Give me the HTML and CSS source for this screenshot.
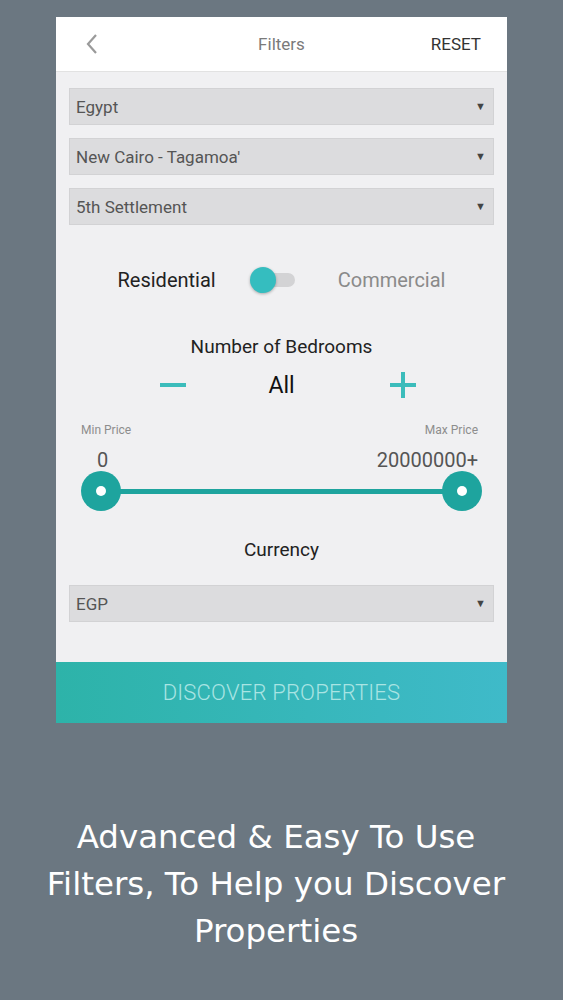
FILE: index.html
```html
<!DOCTYPE html>
<html>
<head>
<meta charset="utf-8">
<link rel="stylesheet" href="styles.css">
</head>
<body>
<div class="card">
  <div class="header">
    <svg class="back" width="14" height="22" viewBox="0 0 14 22"><path d="M11 2 L3 11 L11 20" fill="none" stroke="#9a9a9a" stroke-width="2.2"/></svg>
    <span class="title">Filters</span>
    <span class="reset">RESET</span>
  </div>
  <div class="body">
    <div class="select"><span>Egypt</span><span class="arrow">▼</span></div>
    <div class="select"><span>New Cairo - Tagamoa'</span><span class="arrow">▼</span></div>
    <div class="select"><span>5th Settlement</span><span class="arrow">▼</span></div>

    <div class="type-row">
      <span class="res">Residential</span>
      <span class="toggle"><span class="track"></span><span class="knob"></span></span>
      <span class="com">Commercial</span>
    </div>

    <div class="label bedrooms">Number of Bedrooms</div>
    <div class="counter">
      <span class="minus"></span>
      <span class="all">All</span>
      <span class="plus"></span>
    </div>

    <div class="price-labels"><span>Min Price</span><span>Max Price</span></div>
    <div class="price-values"><span class="minv">0</span><span>20000000+</span></div>
    <div class="slider">
      <span class="thumb"></span>
      <span class="line"></span>
      <span class="thumb"></span>
    </div>

    <div class="label currency">Currency</div>
    <div class="select"><span>EGP</span><span class="arrow">▼</span></div>
  </div>
  <div class="discover">DISCOVER PROPERTIES</div>
</div>
<div class="caption">Advanced &amp; Easy To Use<br>Filters, To Help you Discover<br>Properties</div>
</body>
</html>
```
FILE: styles.css
```css
html, body { margin: 0; padding: 0; }
body {
  background: #6b7781;
  width: 563px;
  height: 1000px;
  font-family: Roboto, "Noto Sans", sans-serif;
  overflow: hidden;
}
.card {
  margin: 17px 0 0 56px;
  width: 451px;
  background: #f0f0f2;
}
.header {
  height: 55px;
  background: #fff;
  border-bottom: 1px solid #e2e2e2;
  display: flex;
  align-items: center;
  position: relative;
  padding: 0 26px 0 29px;
  box-sizing: border-box;
  justify-content: space-between;
}
.title {
  position: absolute;
  left: 0; right: 0;
  text-align: center;
  color: #7a7a7a;
  font-size: 17px;
  pointer-events: none;
}
.reset { color: #333; font-size: 17px; }
.body { padding: 16px 13px 40px; }
.select {
  height: 37px;
  box-sizing: border-box;
  background: #dcdcde;
  border: 1px solid #d2d2d4;
  display: flex;
  align-items: center;
  justify-content: space-between;
  padding: 0 7px 0 6px;
  color: #555;
  font-size: 17px;
  margin-bottom: 13px;
}
.select:last-child { margin-bottom: 0; }
.arrow { font-size: 11px; color: #444; }
.type-row {
  display: flex;
  align-items: center;
  justify-content: center;
  margin-top: 35px;
  height: 40px;
  font-size: 20px;
}
.res { color: #222; margin-right: 34px; }
.com { color: #8a8a8a; margin-left: 42px; }
.toggle { position: relative; width: 46px; height: 30px; display: inline-block; }
.track {
  position: absolute; left: 8px; top: 8px; width: 37px; height: 14px;
  border-radius: 7px; background: #d3d3d5;
}
.knob {
  position: absolute; left: 0; top: 2px; width: 26px; height: 26px; border-radius: 50%;
  background: #35bdbf;
  box-shadow: 0 1px 3px rgba(0,0,0,0.3);
}
.label {
  text-align: center;
  color: #222;
  font-size: 19px;
}
.bedrooms { margin-top: 35px; }
.counter {
  display: grid;
  grid-template-columns: 1fr auto 1fr;
  align-items: center;
  height: 40px;
  margin-top: 7px;
}
.all { font-size: 23px; color: #111; }
.minus { justify-self: end; margin-right: 82px; width: 26px; height: 4px; background: #3bbcbb; }
.plus { justify-self: start; margin-left: 95px; width: 26px; height: 26px; position: relative; }
.plus::before, .plus::after { content: ""; position: absolute; background: #3bbcbb; }
.plus::before { left: 0; top: 11px; width: 26px; height: 4px; }
.plus::after { left: 11px; top: 0; width: 4px; height: 26px; }
.price-labels {
  display: flex; justify-content: space-between;
  font-size: 12px; color: #8d8d8d;
  padding: 0 16px 0 12px;
  margin-top: 18px;
}
.price-values {
  display: flex; justify-content: space-between;
  font-size: 20px; color: #555;
  padding: 0 16px 0 28px;
  margin-top: 11px;
}
.slider {
  display: flex; align-items: center;
  padding: 0 12px;
  margin-top: -1px;
}
.thumb {
  width: 40px; height: 40px; border-radius: 50%;
  background: #1ea49e; position: relative; flex: none;
}
.thumb::after {
  content: ""; position: absolute; left: 15px; top: 15px;
  width: 10px; height: 10px; border-radius: 50%; background: #fff;
}
.line { flex: 1; height: 5px; background: #1ea49e; margin: 0 -2px; }
.currency { margin-top: 27px; margin-bottom: 24px; }
.discover {
  height: 61px;
  background: linear-gradient(90deg, #2db3a9, #3fbac9);
  color: #a9e4e3;
  font-size: 22px;
  font-weight: 300;
  display: flex; align-items: center; justify-content: center;
  letter-spacing: 0.2px;
}
.caption {
  margin-top: 91px;
  padding-right: 11px;
  text-align: center;
  color: #fff;
  font-family: "DejaVu Sans", sans-serif;
  font-size: 32.5px;
  line-height: 47px;
}
```
